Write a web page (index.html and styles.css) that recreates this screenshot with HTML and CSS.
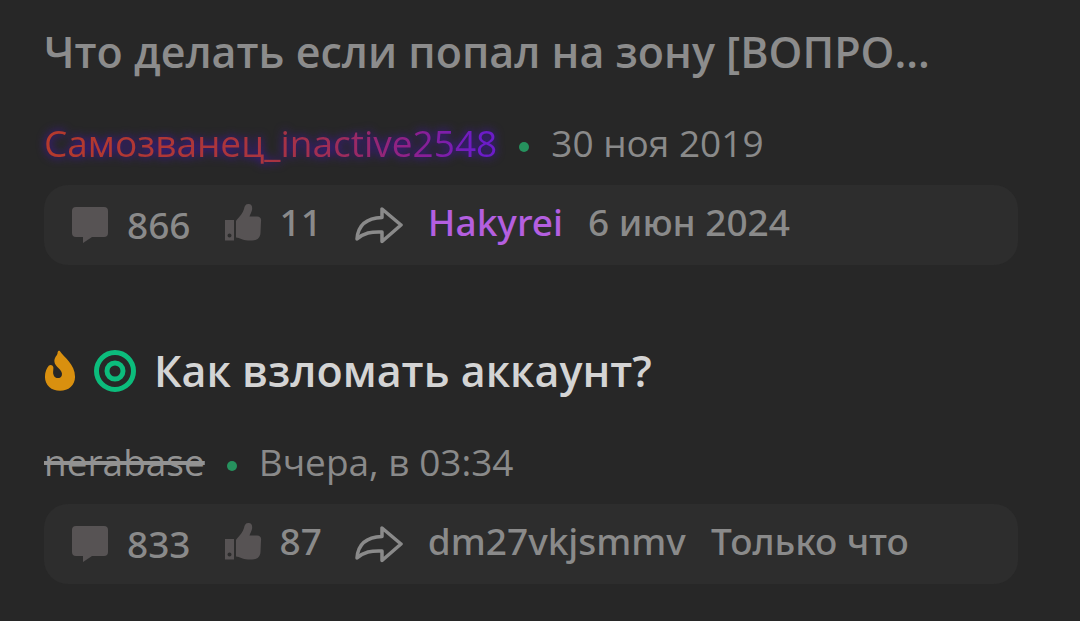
FILE: index.html
```html
<!DOCTYPE html>
<html lang="ru">
<head>
<meta charset="utf-8">
<meta name="viewport" content="width=device-width, initial-scale=1">
<title>Темы</title>
<link rel="stylesheet" href="styles.css">
</head>
<body>
<svg class="sprite" aria-hidden="true">
  <symbol id="comment" viewBox="0 0 38 38"><path d="M5 1H33Q37 1 37 5V27Q37 31 33 31H21L12 37V31H5Q1 31 1 27V5Q1 1 5 1Z"/></symbol>
  <symbol id="like" viewBox="0 0 38 38"><path fill-rule="evenodd" d="M1 17H10V37.500H1ZM5.500 30.500A2 2 0 1 0 5.500 34.500A2 2 0 1 0 5.500 30.500Z"/><path d="M12 18.500Q12 17.500 13 16.500C16 13 19 10 20 6C20.500 3 21.500 1 24.500 1C28 1 28.500 4 28 7C27.500 9.500 26 11.500 25.500 13.500H33C36.500 13.500 37.500 16 37 18.500L36.500 30C36.200 35 33 37.500 28 37.500H24C18 37.500 16 34.500 12 34.500Z"/></symbol>
  <symbol id="share" viewBox="0 0 48 38"><path d="M27 3V11.500C12 12 3 19 2 33C9 27 16 25.500 27 26V35.500L46 19Z" fill="none" stroke="currentColor" stroke-width="3.500" stroke-linejoin="round"/></symbol>
</svg>
<main class="topics">
  <article class="topic">
    <h2 class="title"><a class="title-text" href="#">Что делать если попал на зону [ВОПРО...</a></h2>
    <div class="meta">
      <a class="author" href="#"><span class="glow">Самозванец_inactive2548</span></a>
      <span class="dot"></span>
      <time>30 ноя 2019</time>
    </div>
    <div class="bar">
      <a class="stat" href="#"><svg class="icon"><use href="#comment"/></svg>866</a>
      <div class="stat raised"><svg class="icon"><use href="#like"/></svg>11</div>
      <div class="last">
        <svg class="share"><use href="#share"/></svg>
        <a class="user raised violet" href="#">Hakyrei</a>
        <time class="raised">6 июн 2024</time>
      </div>
    </div>
  </article>
  <article class="topic">
    <h2 class="title unread">
      <svg class="flame" viewBox="0 0 34 44"><path d="M17 1C21 7 33 15 33 28C33 37 26 43 17 43C8 43 1 37 1 28C1 23 3 19 5 16.500C7 14.500 10 16 10 18.500C10 22 9 24 10.500 27C12 30.500 18 30.500 19 26.500C20.500 20.500 11 18 11 11.500C11 7 14.500 5.500 14.500 2C15 .500 16.200 0 17 1Z"/></svg>
      <svg class="target" viewBox="0 0 42 42"><circle cx="21" cy="21" r="18.500"/><circle cx="21" cy="21" r="8"/></svg>
      <a class="title-text" href="#">Как взломать аккаунт?</a>
    </h2>
    <div class="meta">
      <a class="author banned" href="#">nerabase</a>
      <span class="dot"></span>
      <time>Вчера, в 03:34</time>
    </div>
    <div class="bar">
      <a class="stat" href="#"><svg class="icon"><use href="#comment"/></svg>833</a>
      <div class="stat raised"><svg class="icon"><use href="#like"/></svg>87</div>
      <div class="last">
        <svg class="share"><use href="#share"/></svg>
        <a class="user raised" href="#">dm27vkjsmmv</a>
        <time class="raised">Только что</time>
      </div>
    </div>
  </article>
</main>
</body>
</html>
```
FILE: styles.css
```css
* {
  box-sizing: border-box;
}

body {
  margin: 0;
  background: #272727;
  color: #8a8a8a;
  font: 400 37px/52px "Open Sans", "Noto Sans", sans-serif;
}

a {
  color: inherit;
  text-decoration: none;
}

.sprite {
  position: absolute;
  width: 0;
  height: 0;
}

.topics {
  display: flex;
  flex-direction: column;
  gap: 76px;
  padding: 22px 62px 34px 44px;
}

.title {
  display: flex;
  align-items: center;
  gap: 18px;
  margin: 0 0 35px;
  font-size: 43px;
  line-height: 60px;
  font-weight: 600;
  color: #8c8c8c;
}

.title-text {
  overflow: hidden;
  white-space: nowrap;
  text-overflow: ellipsis;
}

.unread {
  color: #d4d4d4;
}

.flame {
  flex: none;
  width: 32px;
  height: 44px;
  fill: #d9900f;
}

.target {
  flex: none;
  width: 42px;
  height: 42px;
  fill: none;
  stroke: #0cbc7c;
  stroke-width: 5;
}

.meta {
  display: flex;
  align-items: center;
  gap: 22px;
  margin-bottom: 16px;
}

.glow {
  background: linear-gradient(90deg, #b53a2c 0%, #a83440 50%, #9c2c5c 66%, #8c2090 82%, #6c1cc8 96%);
  background-clip: text;
  -webkit-background-clip: text;
  color: transparent;
}

.author {
  filter: drop-shadow(0 0 5px #4510c0);
}

.banned {
  filter: none;
  color: #929292;
  text-decoration: line-through;
  text-decoration-thickness: 4px;
}

.dot {
  width: 10px;
  height: 10px;
  margin-top: 8px;
  border-radius: 50%;
  background: #26925e;
}

.bar {
  display: flex;
  align-items: center;
  gap: 33px;
  min-height: 80px;
  padding: 0 27px;
  border-radius: 24px;
  background: #2d2d2d;
  font-family: "Noto Sans", "Open Sans", sans-serif;
  font-weight: 500;
  white-space: nowrap;
}

.stat,
.last {
  display: flex;
  align-items: center;
}

.stat {
  gap: 18px;
}

.last {
  gap: 25px;
}

.raised {
  padding-bottom: 6px;
}

.icon {
  width: 38px;
  height: 38px;
  fill: #575354;
}

.share {
  width: 48px;
  height: 38px;
}

.violet {
  color: #b45fe0;
}
```
